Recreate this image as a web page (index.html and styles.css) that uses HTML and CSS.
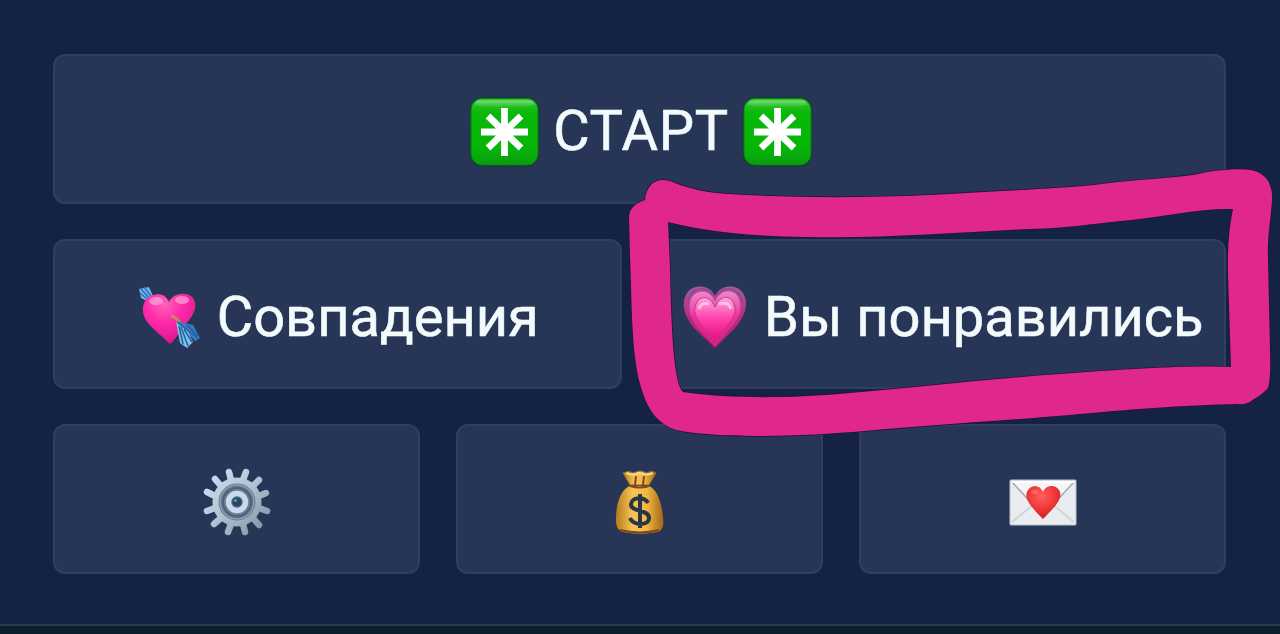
FILE: index.html
```html
<!DOCTYPE html>
<html lang="ru">
<head>
<meta charset="utf-8">
<title>Меню</title>
<link rel="stylesheet" href="styles.css">
</head>
<body>
<svg class="defs" width="0" height="0" aria-hidden="true">
  <defs>
    <linearGradient id="green" x1="0" y1="0" x2="0" y2="1"><stop offset="0" stop-color="#39c639"/><stop offset=".22" stop-color="#08b808"/><stop offset=".75" stop-color="#07b507"/><stop offset="1" stop-color="#0b9c12"/></linearGradient>
    <linearGradient id="shine" x1="0" y1="0" x2="0" y2="1"><stop offset="0" stop-color="#8be38a"/><stop offset="1" stop-color="#20bd20"/></linearGradient>
    <radialGradient id="pink" cx=".4" cy=".2" r=".8"><stop offset="0" stop-color="#ff62bd"/><stop offset=".45" stop-color="#ff2aa8"/><stop offset="1" stop-color="#dc168c"/></radialGradient>
    <linearGradient id="grow" x1="0" y1="0" x2="0" y2="1"><stop offset="0" stop-color="#f7a9da"/><stop offset=".5" stop-color="#ff3fab"/><stop offset="1" stop-color="#e30f7d"/></linearGradient>
    <linearGradient id="growMid" x1="0" y1="0" x2="0" y2="1"><stop offset="0" stop-color="#ee8bcb"/><stop offset=".5" stop-color="#e9309b"/><stop offset="1" stop-color="#d31879"/></linearGradient>
    <linearGradient id="growOut" x1="0" y1="0" x2="0" y2="1"><stop offset="0" stop-color="#a45c9c"/><stop offset=".5" stop-color="#b92a84"/><stop offset="1" stop-color="#c9156f"/></linearGradient>
    <linearGradient id="steel" gradientUnits="userSpaceOnUse" x1="8" y1="8" x2="60" y2="60"><stop offset="0" stop-color="#cbdbed"/><stop offset=".5" stop-color="#b0c1d2"/><stop offset="1" stop-color="#8797a9"/></linearGradient>
    <linearGradient id="gold" x1="0" y1="0" x2="1" y2="0"><stop offset="0" stop-color="#b57a1e"/><stop offset=".35" stop-color="#f7c453"/><stop offset=".65" stop-color="#f2b741"/><stop offset="1" stop-color="#a4661a"/></linearGradient>
    <radialGradient id="red" cx=".45" cy=".3" r=".7"><stop offset="0" stop-color="#ff605c"/><stop offset=".6" stop-color="#ef3436"/><stop offset="1" stop-color="#c32229"/></radialGradient>
    <symbol id="asterisk" viewBox="0 0 70 70">
      <rect x="0" y="0" width="70" height="70" rx="13" fill="#173c2b" opacity=".75"/>
      <rect x="1.500" y="1.500" width="67" height="66.500" rx="11" fill="url(#green)" stroke="#0a7d18"/>
      <path d="M9 3.500H61Q64 4 65 8Q36 13 5 8Q6 4 9 3.500Z" fill="url(#shine)" opacity=".8"/>
      <g fill="none" stroke="#fff" stroke-width="6.800"><path d="M35 11V59M11.500 35H58.500M18.500 19L51.500 51M51.500 19L18.500 51"/></g>
      <circle cx="35" cy="35" r="8" fill="#fff"/>
    </symbol>
  </defs>
</svg>
<main class="keyboard">
  <div class="row">
    <button class="key key-start">
      <svg class="emoji-square"><use href="#asterisk"/></svg>
      <span class="label label-start">СТАРТ</span>
      <svg class="emoji-square"><use href="#asterisk"/></svg>
    </button>
  </div>
  <div class="row">
    <button class="key key-match">
      <svg class="emoji" viewBox="0 0 66 66">
        <path d="M2 5L12 3L17 14L12 18L4 14Z" fill="#67b5ee"/>
        <path d="M3 4L15 17M7 3L14 12M3 9L10 15" stroke="#356fab" stroke-width="1.300"/>
        <path d="M32 18C36 9 50 7 56 14C62 24 55 33 48 41C42 49 37 57 33 60C27 54 17 46 11 39C4 31 4 18 12 13C20 8 29 10 32 18Z" fill="url(#pink)"/>
        <ellipse cx="19" cy="17" rx="7" ry="4" fill="#ffb1dc" opacity=".65"/><ellipse cx="45" cy="16" rx="7" ry="4" fill="#ffb1dc" opacity=".65"/>
        <path d="M34 32Q39 33 44 40" fill="none" stroke="#c98565" stroke-width="3"/>
        <path d="M39 37L56 41L63 54L58 57L51 49Z" fill="#347bc6"/>
        <path d="M39 38L43 59L50 64L56 58L51 47Z" fill="#7bc1eb"/>
        <path d="M41 39L61 54M42 42L46 60M44 43L51 62M47 45L55 58M50 41L61 52" fill="none" stroke="#275f9c" stroke-width="1.500"/>
      </svg>
      <span class="label">Совпадения</span>
    </button>
    <button class="key key-liked">
      <svg class="emoji" viewBox="0 0 66 66">
        <path d="M33 12C39 0 55 0 61 9C68 20 62 34 52 45L33 64L13 45C3 34-2 20 5 9C11 0 27 0 33 12Z" fill="url(#growOut)"/>
        <path d="M8 24C4 12 11 6 18 5Q27 4 31 13M35 13Q39 4 48 5C56 6 62 13 58 24" fill="none" stroke="#7d4c8c" stroke-width="2" opacity=".7"/>
        <path d="M33 17C39 3 53 5 57 14C62 26 55 36 47 45L33 61L18 45C10 36 4 26 9 14C14 5 28 4 33 17Z" fill="url(#growMid)" stroke="#cf3f9b"/>
        <path d="M33 23C38 10 49 11 52 20C56 29 49 37 43 44L33 57L22 44C16 37 10 29 14 20C18 11 28 11 33 23Z" fill="url(#grow)" stroke="#c93492"/>
        <path d="M17 25Q19 18 27 20M37 20Q47 17 49 25" fill="none" stroke="#ffd6ef" stroke-width="3" opacity=".7"/>
      </svg>
      <span class="label">Вы понравились</span>
    </button>
  </div>
  <div class="row">
    <button class="key">
      <svg class="emoji-gear" viewBox="0 0 68 68">
        <g stroke="url(#steel)" stroke-width="6.500" stroke-linecap="round">
          <path d="M28 12L26 4M40 12L43 4M50 18L56 12M56 28L63 25M56 40L64 43M50 50L56 57M40 56L42 64M28 56L25 64M18 50L11 56M12 40L4 43M12 28L4 24M18 18L12 11"/>
        </g>
        <circle cx="34" cy="34" r="21.500" fill="#62758b" stroke="url(#steel)" stroke-width="6"/>
        <circle cx="34" cy="34" r="17" fill="none" stroke="#8fa1b2" stroke-width="1.500"/>
        <circle cx="34" cy="34" r="14" fill="#6b7e93" stroke="#4b6076" stroke-width="1.500"/>
        <circle cx="34" cy="34" r="8.500" fill="#41627e" stroke="#cbdaea" stroke-width="5.500"/>
        <circle cx="34" cy="34" r="4" fill="#244760"/><circle cx="32.500" cy="32.500" r="1.300" fill="#8ca9bf"/>
      </svg>
    </button>
    <button class="key">
      <svg class="emoji-bag" viewBox="0 0 50 66">
        <path d="M15 17C6 20 1 34 1 50Q0 61 8 63Q25 66 42 63Q50 61 48 49C47 34 42 20 34 17Z" fill="url(#gold)"/>
        <path d="M8 4Q13 1 19 4Q25 0 31 4Q38 1 41 4L34 16H15Z" fill="url(#gold)" stroke="#9a6a28"/>
        <path d="M11 4Q17 7 24 4Q32 7 38 4" fill="none" stroke="#edd891" stroke-width="2"/>
        <path d="M15 17Q25 20 34 17M21 7L20 16M29 7L28 16M5 61Q25 66 44 61" fill="none" stroke="#7d481b" stroke-width="2"/>
        <path d="M33 34C30 28 17 27 16 35C15 43 34 40 34 49C34 57 18 57 15 49M25 25V59" fill="none" stroke="#293647" stroke-width="4"/>
      </svg>
    </button>
    <button class="key">
      <svg class="emoji-letter" viewBox="0 0 68 48">
        <rect x="1" y="1" width="66" height="45" rx="1" fill="#e9edef" stroke="#b8c3cd"/>
        <path d="M3 43L25 25M65 43L43 25" stroke="#d0d5da" stroke-width="2"/>
        <path d="M3 3L28 30Q34 35 40 30L65 3" fill="#f6f6f6" stroke="#9ea9b1" stroke-width="1.500"/>
        <path d="M3 3H65" stroke="#fff" stroke-width="2"/>
        <path d="M34 13C37 5 48 5 51 13C53 20 47 27 34 40C22 28 15 20 18 13C21 5 31 5 34 13Z" fill="url(#red)"/>
        <ellipse cx="26" cy="13" rx="4" ry="2" fill="#ff9289" opacity=".4"/>
      </svg>
    </button>
  </div>
</main>
<footer class="bottom-edge"></footer>
<svg class="marker" viewBox="0 0 1280 634" aria-hidden="true">
  <path fill-rule="evenodd" d="M645 200C647 181 660 176 675 183C690 189 709 193 729 194C790 198 861 198 930 195C995 191 1052 189 1094 185C1135 179 1187 178 1207 172Q1234 168 1251 170C1266 173 1273 184 1272 200C1271 219 1267 235 1268 260L1270 350Q1271 378 1268 388C1262 395 1255 398 1250 402Q1244 405 1237 404C1188 405 1120 410 1070 415C1012 420 930 425 865 431C805 436 727 439 681 431C656 426 646 406 640 384C631 350 632 300 630 257L629 216Q630 205 645 200ZM668 222L670 267C671 309 672 350 677 377Q679 388 683 392C728 399 792 398 839 394C912 388 987 379 1060 374C1126 369 1190 365 1231 367L1228 275Q1227 236 1233 209C1201 208 1167 216 1131 220C1088 224 1070 228 1030 229C960 232 878 239 807 237C754 236 713 233 668 222Z"/>
</svg>
</body>
</html>
```
FILE: styles.css
```css
* { box-sizing: border-box; }
body {
  margin: 0;
  height: 634px;
  overflow: hidden;
  position: relative;
  display: flex;
  flex-direction: column;
  background: #142246;
  font-family: Roboto, "Noto Sans", sans-serif;
}
.defs { position: absolute; }
.keyboard {
  flex: 1;
  padding: 54px 54px 0 53px;
  display: flex;
  flex-direction: column;
  gap: 35px;
}
.row {
  display: grid;
  grid-auto-flow: column;
  grid-auto-columns: minmax(0, 1fr);
  gap: 36px;
  height: 150px;
}
.key {
  min-width: 0;
  padding: 0;
  display: flex;
  align-items: center;
  justify-content: center;
  gap: 16px;
  border: 2px solid #303e60;
  border-radius: 12px;
  background: #273657;
  color: #f3fafb;
  font: 400 56px/66px Roboto, "Noto Sans", sans-serif;
  -webkit-text-stroke: 0.6px #f3fafb;
}
.key svg { display: block; flex: none; }
.key-start { gap: 13px; padding: 6px 0 0 3px; }
.key-match { gap: 14px; padding-left: 1px; }
.key-liked { gap: 16px; padding-left: 2px; }
.label { white-space: nowrap; padding-top: 5px; }
.label-start { padding: 0 0 3px; letter-spacing: 0.7px; }
.emoji-square { width: 71px; height: 70px; }
.emoji { width: 66px; height: 66px; margin-top: 6px; }
.emoji-gear { width: 68px; height: 68px; margin-top: 5px; }
.emoji-bag { width: 50px; height: 66px; margin-top: 5px; }
.emoji-letter { width: 68px; height: 48px; margin-top: 8px; }
.bottom-edge { height: 10px; border-top: 2px solid #2a3a4d; background: #0b1e2e; }
.marker { position: absolute; inset: 0; width: 1280px; height: 634px; pointer-events: none; }
.marker path { fill: #df278c; stroke: #24152f; stroke-width: 1.5px; paint-order: stroke; }
```
